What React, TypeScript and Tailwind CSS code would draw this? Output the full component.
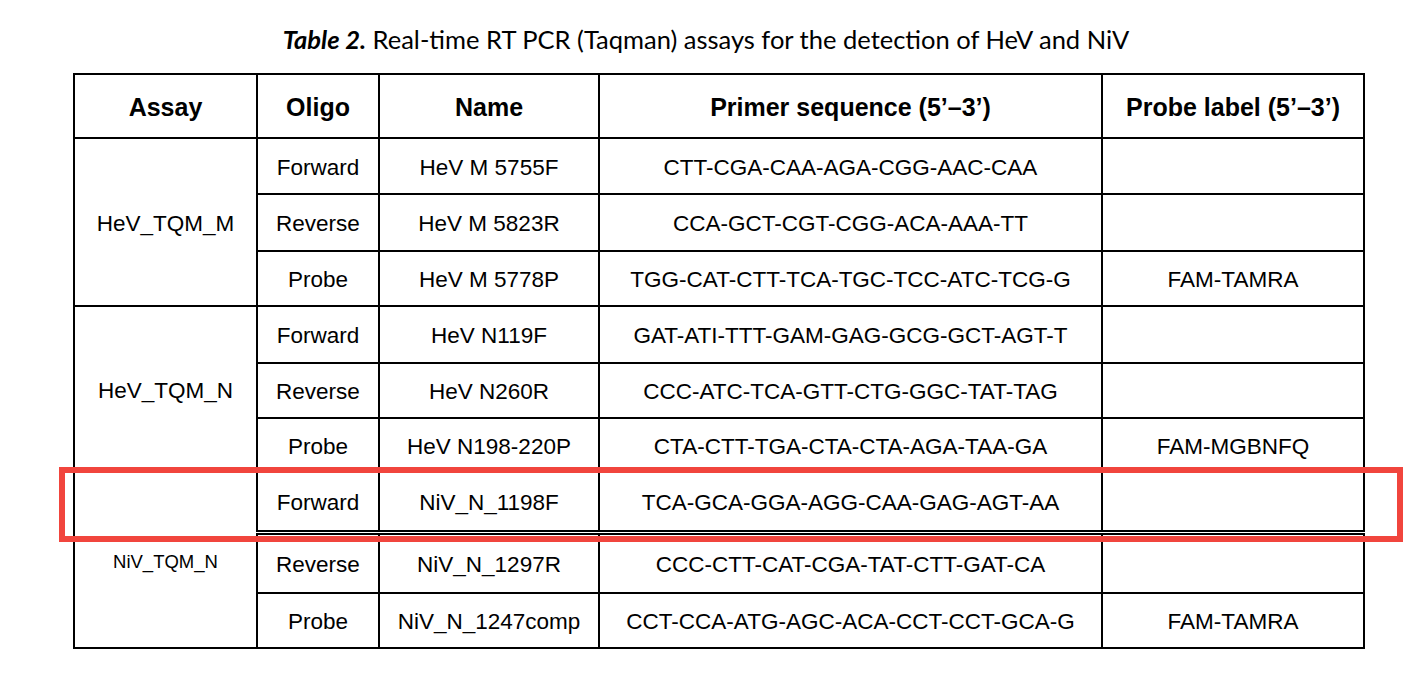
export default function App() {
  const groups = [
    {
      assay: "HeV_TQM_M",
      small: false,
      rows: [
        { oligo: "Forward", name: "HeV M 5755F", seq: "CTT-CGA-CAA-AGA-CGG-AAC-CAA", label: "", h: 56 },
        { oligo: "Reverse", name: "HeV M 5823R", seq: "CCA-GCT-CGT-CGG-ACA-AAA-TT", label: "", h: 57 },
        { oligo: "Probe", name: "HeV M 5778P", seq: "TGG-CAT-CTT-TCA-TGC-TCC-ATC-TCG-G", label: "FAM-TAMRA", h: 55 },
      ],
    },
    {
      assay: "HeV_TQM_N",
      small: false,
      rows: [
        { oligo: "Forward", name: "HeV N119F", seq: "GAT-ATI-TTT-GAM-GAG-GCG-GCT-AGT-T", label: "", h: 57 },
        { oligo: "Reverse", name: "HeV N260R", seq: "CCC-ATC-TCA-GTT-CTG-GGC-TAT-TAG", label: "", h: 55 },
        { oligo: "Probe", name: "HeV N198-220P", seq: "CTA-CTT-TGA-CTA-CTA-AGA-TAA-GA", label: "FAM-MGBNFQ", h: 54 },
      ],
    },
    {
      assay: "NiV_TQM_N",
      small: true,
      rows: [
        { oligo: "Forward", name: "NiV_N_1198F", seq: "TCA-GCA-GGA-AGG-CAA-GAG-AGT-AA", label: "", h: 60, dbl: true },
        { oligo: "Reverse", name: "NiV_N_1297R", seq: "CCC-CTT-CAT-CGA-TAT-CTT-GAT-CA", label: "", h: 61 },
        { oligo: "Probe", name: "NiV_N_1247comp", seq: "CCT-CCA-ATG-AGC-ACA-CCT-CCT-GCA-G", label: "FAM-TAMRA", h: 55 },
      ],
    },
  ];

  const cell = "border-2 border-black text-center align-middle px-0 pb-0 pt-[3px]";

  return (
    <div className="w-[1424px] h-[675px] bg-white text-black overflow-hidden">
      <div
        className="h-[73px] pt-[23px] pr-[12px] text-center text-[25.5px] leading-[32px]"
        style={{ fontFamily: "Lato, 'Open Sans', sans-serif" }}
      >
        <span className="font-bold italic">Table 2.</span> Real-time RT PCR (Taqman) assays for the detection of HeV and NiV
      </div>
      <div className="relative ml-[73px] w-[1290px]" style={{ fontFamily: "'Liberation Sans', Arial, sans-serif" }}>
        <table className="w-[1290px] table-fixed border-collapse">
          <colgroup>
            <col className="w-[183px]" />
            <col className="w-[122px]" />
            <col className="w-[220px]" />
            <col className="w-[503px]" />
            <col className="w-[262px]" />
          </colgroup>
          <thead>
            <tr className="h-[64px] text-[25px] font-bold">
              <th className={cell}>Assay</th>
              <th className={cell}>Oligo</th>
              <th className={cell}>Name</th>
              <th className={cell}>Primer sequence (5’–3’)</th>
              <th className={cell}>Probe label (5’–3’)</th>
            </tr>
          </thead>
          <tbody className="text-[22.5px]">
            {groups.map((g) =>
              g.rows.map((r, i) => {
                const b = r.dbl ? " border-b-[5px] [border-bottom-style:double]" : "";
                return (
                  <tr key={g.assay + i} style={{ height: r.h }}>
                    {i === 0 && (
                      <td rowSpan={3} className={cell + (g.small ? " text-[18.5px]" : "")}>
                        {g.assay}
                      </td>
                    )}
                    <td className={cell + b}>{r.oligo}</td>
                    <td className={cell + b}>{r.name}</td>
                    <td className={cell + b}>{r.seq}</td>
                    <td className={cell + b}>{r.label}</td>
                  </tr>
                );
              })
            )}
          </tbody>
        </table>
        <div className="absolute left-[-14px] top-[394px] w-[1344px] h-[75px] border-[6px] border-[#f1453d] pointer-events-none" />
      </div>
    </div>
  );
}
